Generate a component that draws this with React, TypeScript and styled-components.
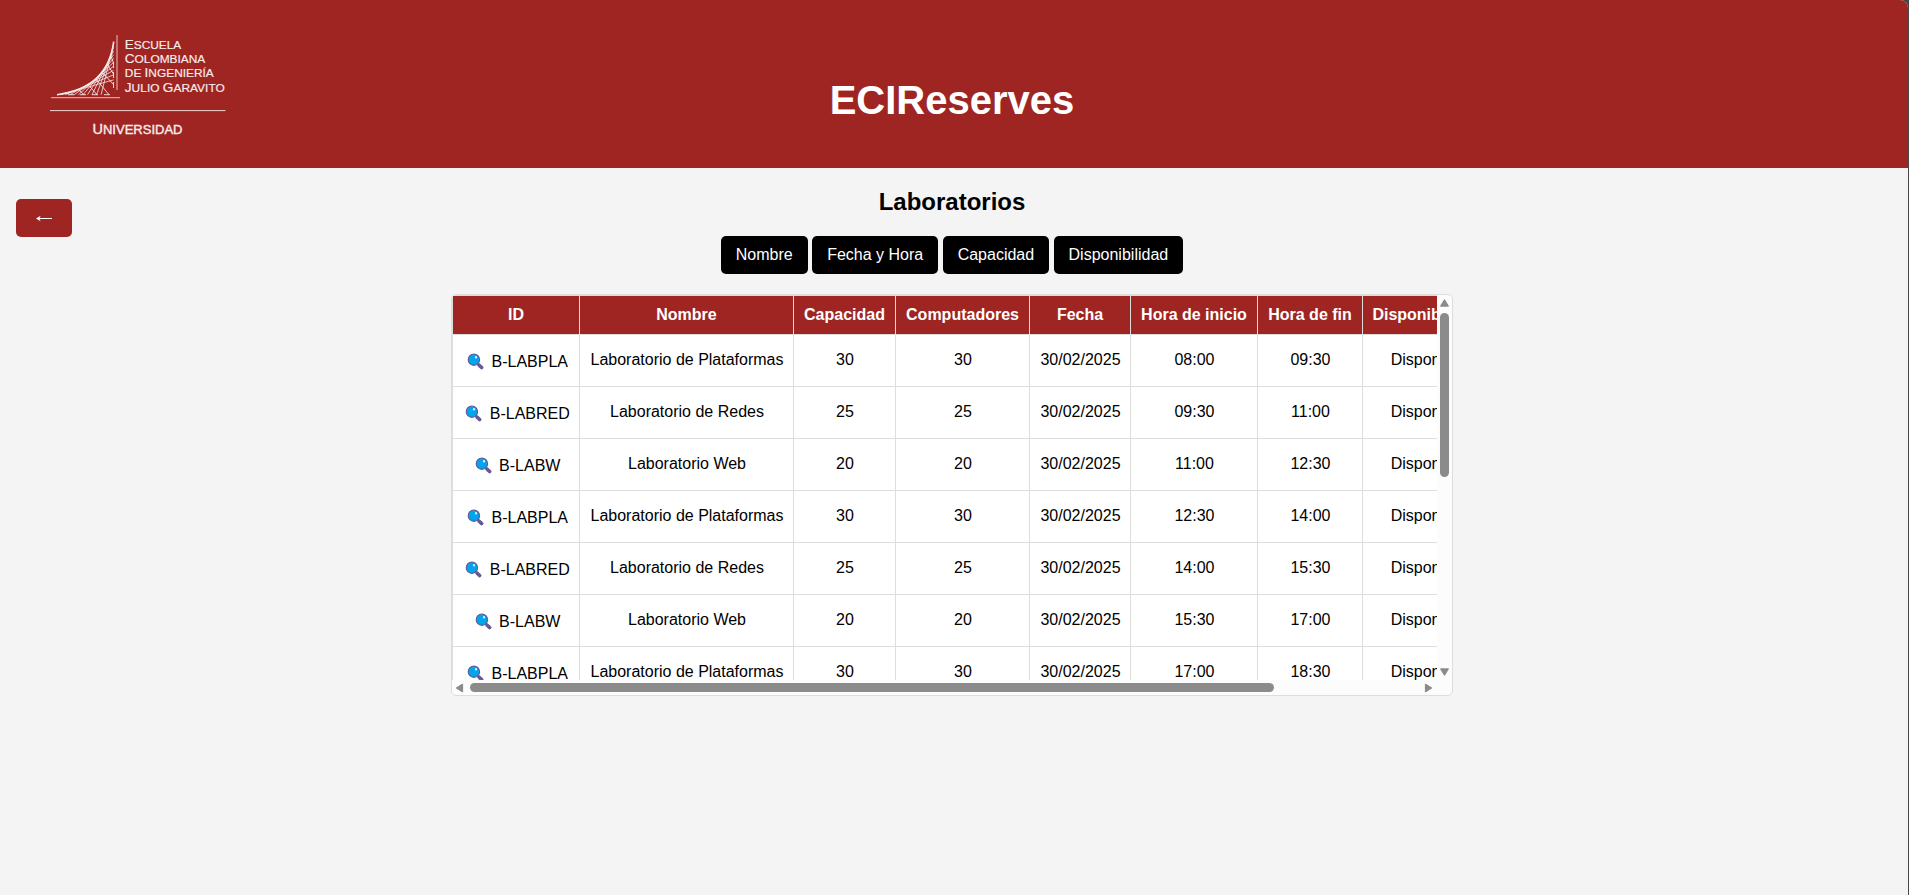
import React from "react";
import styled, { createGlobalStyle } from "styled-components";

const RED = "#9f2523";

const Global = createGlobalStyle`
  * { box-sizing: border-box; }
  html { background: #464646; }
  body { margin: 0; font-family: Arial, "Liberation Sans", sans-serif; color: #000; }
`;

const Page = styled.div`
  width: 1908px;
  height: 895px;
  background: #f4f4f4;
  border-top-right-radius: 8px;
  overflow: hidden;
`;

const Header = styled.header`
  display: grid;
  grid-template-columns: 300px 1fr 300px;
  width: 100%;
  height: 168px;
  padding-right: 4px;
  background: ${RED};
`;

const Logo = styled.svg`
  width: 220px;
  height: 130px;
  margin: 20px 0 0 30px;
  font-family: Arial, "Liberation Sans", sans-serif;
`;

const Title = styled.h1`
  margin: 77px 0 0;
  font-size: 40px;
  line-height: 46px;
  text-align: center;
  color: #fff;
`;

const Main = styled.main`
  display: grid;
  grid-template-columns: 1fr 1002px 1fr;
  padding-right: 4px;
`;

const BackButton = styled.button`
  width: 56px;
  height: 38px;
  margin: 31px 0 0 16px;
  padding: 1px 0 0;
  border: 0;
  border-radius: 5px;
  background: ${RED};
  color: #fff;
  display: flex;
  align-items: center;
  justify-content: center;
`;

const Content = styled.section`
  display: flex;
  flex-direction: column;
  align-items: center;
`;

const Subtitle = styled.h2`
  margin: 20px 0 0;
  font-size: 24px;
  line-height: 28px;
`;

const Filters = styled.div`
  display: flex;
  gap: 4.45px;
  margin-top: 20px;
`;

const FilterButton = styled.button`
  height: 38px;
  padding: 0 15px;
  border: 0;
  border-radius: 5px;
  background: #000;
  color: #fff;
  font: 16px/38px Arial, "Liberation Sans", sans-serif;
`;

const Frame = styled.div`
  display: grid;
  grid-template-columns: 985px 15px;
  grid-template-rows: 385px 15px;
  width: 1002px;
  height: 402px;
  margin-top: 20px;
  border: 1px solid #ddd;
  border-radius: 5px;
  background: #fcfcfc;
  overflow: hidden;
`;

const Viewport = styled.div`
  overflow: hidden;
  background: #fff;
`;

const Table = styled.table`
  width: 1041px;
  table-layout: fixed;
  border-collapse: separate;
  border-spacing: 0;
  border-top: 1px solid #ddd;
  border-left: 1px solid #ddd;
`;

const Col = styled.col<{ $w: number }>`
  width: ${(p) => p.$w}px;
`;

const Th = styled.th`
  height: 39px;
  padding: 0;
  border-right: 1px solid #ddd;
  border-bottom: 1px solid #ddd;
  background: ${RED};
  color: #fff;
  font-size: 16px;
  line-height: 18px;
  white-space: nowrap;
`;

const Td = styled.td`
  height: 52px;
  padding: 0 0 1px 1px;
  border-right: 1px solid #ddd;
  border-bottom: 1px solid #ddd;
  font-size: 16px;
  line-height: 18px;
  text-align: center;
  white-space: nowrap;
`;

const IdCell = styled.div`
  display: flex;
  align-items: center;
  justify-content: center;
  gap: 7.5px;
  padding: 3px 0 0 2px;
`;

const VerticalBar = styled.div`
  display: flex;
  flex-direction: column;
  align-items: center;
  padding-top: 4px;
`;

const HorizontalBar = styled.div`
  display: flex;
  align-items: center;
  padding-left: 3px;
`;

const VerticalThumb = styled.div`
  width: 9px;
  height: 164px;
  margin: 6px 0 191px;
  border-radius: 5px;
  background: #8b8b8b;
`;

const HorizontalThumb = styled.div`
  width: 804px;
  height: 9px;
  margin: 0 150px 0 6px;
  border-radius: 5px;
  background: #8b8b8b;
`;

const columns: [string, number][] = [
  ["ID", 127],
  ["Nombre", 214],
  ["Capacidad", 102],
  ["Computadores", 134],
  ["Fecha", 101],
  ["Hora de inicio", 127],
  ["Hora de fin", 105],
  ["Disponibilidad", 130],
];

const labs = [
  ["B-LABPLA", "Laboratorio de Plataformas", "30"],
  ["B-LABRED", "Laboratorio de Redes", "25"],
  ["B-LABW", "Laboratorio Web", "20"],
];
const times = ["08:00", "09:30", "11:00", "12:30", "14:00", "15:30", "17:00", "18:30"];

const Magnifier = () => (
  <svg width="17" height="17" viewBox="0 0 17 17">
    <path d="M10 10L12 12" stroke="#635994" strokeWidth="2" />
    <path d="M12.2 12.2L14.6 14.6" stroke="#635994" strokeWidth="3.6" strokeLinecap="round" />
    <circle cx="6.9" cy="6.7" r="5.7" fill="#00a6ed" stroke="#635994" strokeWidth="1.1" />
    <ellipse cx="9" cy="4.3" rx="1" ry="1.2" fill="#e5f8ff" />
  </svg>
);

const Arrow = ({ angle }: { angle: number }) => (
  <svg width="9" height="8" viewBox="0 0 9 8" transform={`rotate(${angle})`}>
    <path d="M4.5 1L8.2 7H0.8Z" fill="#8b8b8b" stroke="#8b8b8b" strokeWidth="1.4" strokeLinejoin="round" />
  </svg>
);

/* The cables of the emblem are tangents of its outer curve. */
const tangents = [0.1, 0.18, 0.26, 0.34, 0.42, 0.5, 0.58, 0.66, 0.75, 0.85].map((t) => {
  const s = 1 - t;
  const x = s * s * 83.7 + 2 * s * t * 77.7 + t * t * 26.3;
  const y = s * s * 21.7 + 2 * s * t * 68.3 + t * t * 74.7;
  const slope = (s * 46.6 + t * 6.4) / (s * -6 + t * -51.4);
  const top = y + (83.5 - x) * slope;
  const left = x + (74.7 - y) / slope;
  return `M83.5 ${top.toFixed(1)}L${left.toFixed(1)} 74.7`;
});

const names: [string[], number, number][] = [
  [["E", "SCUELA"], 28.7, 56.5],
  [["C", "OLOMBIANA"], 43, 80.5],
  [["", "DE ", "I", "NGENIERÍA"], 57.3, 89],
  [["J", "ULIO ", "G", "ARAVITO"], 71.7, 100],
];

const SchoolLogo = () => (
  <Logo viewBox="0 0 220 130" fill="#f8eeee">
    <g fill="none" stroke="#f5e9e9">
      <path d="M87 15V70M21 77.7H90" strokeWidth="0.8" />
      <path d="M20 90.6H195.5" strokeWidth="0.9" />
      <path d="M27 74.7Q77.7 68.3 83.7 21.7" strokeWidth="1.6" />
      <path d={tangents.join("")} strokeWidth="0.8" />
      <path
        d="M81 36L83.5 43M77 44L83.5 54M72 52L83.5 64.5M66 59L79 74.7M58 64.5L67 74.7M48 69L54 74.7M83.5 42V48M83.5 52V58M83.5 62V68M74 74.7H80M62 74.7H68M50 74.7H56M38 74.7H44"
        strokeWidth="0.9"
      />
    </g>
    {names.map(([parts, y, width]) => (
      <text
        key={y}
        x="94.8"
        y={y}
        textLength={width}
        lengthAdjust="spacingAndGlyphs"
        xmlSpace="preserve"
        stroke="#f8eeee"
        strokeWidth="0.15"
      >
        {parts.map((part, i) => (
          <tspan key={i} fontSize={i % 2 ? 11.7 : 13.3}>{part}</tspan>
        ))}
      </text>
    ))}
    <text x="62.5" y="114" textLength="90" lengthAdjust="spacingAndGlyphs" stroke="#f8eeee" strokeWidth="0.35">
      <tspan fontSize="14">U</tspan>
      <tspan fontSize="12.6">NIVERSIDAD</tspan>
    </text>
  </Logo>
);

export default function App() {
  return (
    <>
      <Global />
      <Page>
        <Header>
          <SchoolLogo />
          <Title>ECIReserves</Title>
        </Header>
        <Main>
          <BackButton aria-label="Volver">
            <svg width="18" height="9" viewBox="0 0 18 9">
              <path d="M2 4.5H17" fill="none" stroke="#fff" />
              <path d="M1 4.5L5.6 1.8L4.4 4.5L5.6 7.2Z" fill="#fff" />
            </svg>
          </BackButton>
          <Content>
            <Subtitle>Laboratorios</Subtitle>
            <Filters>
              {["Nombre", "Fecha y Hora", "Capacidad", "Disponibilidad"].map((f) => (
                <FilterButton key={f}>{f}</FilterButton>
              ))}
            </Filters>
            <Frame>
              <Viewport>
                <Table>
                  <colgroup>
                    {columns.map(([name, w]) => <Col key={name} $w={w} />)}
                  </colgroup>
                  <thead>
                    <tr>{columns.map(([name]) => <Th key={name}>{name}</Th>)}</tr>
                  </thead>
                  <tbody>
                    {times.slice(0, 7).map((start, i) => {
                      const [id, name, seats] = labs[i % 3];
                      return (
                        <tr key={start}>
                          <Td><IdCell><Magnifier />{id}</IdCell></Td>
                          <Td>{name}</Td>
                          <Td>{seats}</Td>
                          <Td>{seats}</Td>
                          <Td>30/02/2025</Td>
                          <Td>{start}</Td>
                          <Td>{times[i + 1]}</Td>
                          <Td>Disponible</Td>
                        </tr>
                      );
                    })}
                  </tbody>
                </Table>
              </Viewport>
              <VerticalBar>
                <Arrow angle={0} />
                <VerticalThumb />
                <Arrow angle={180} />
              </VerticalBar>
              <HorizontalBar>
                <Arrow angle={-90} />
                <HorizontalThumb />
                <Arrow angle={90} />
              </HorizontalBar>
            </Frame>
          </Content>
        </Main>
      </Page>
    </>
  );
}
